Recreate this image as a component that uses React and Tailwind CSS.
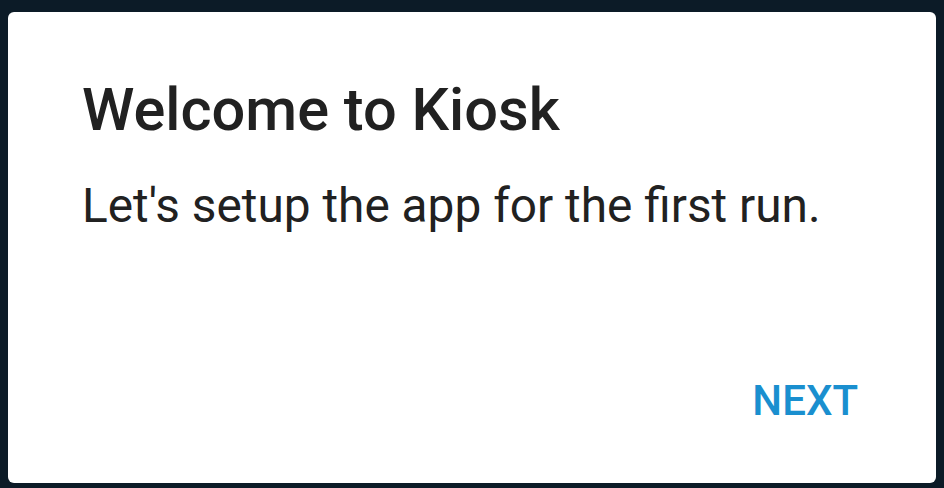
export default function App() {
  return (
    <div className="h-[488px] w-[944px] bg-[#0c1b27] pl-[8px] pr-[8px] pt-[12px] pb-[5px] font-['Roboto',sans-serif]">
      <div className="flex h-full flex-col rounded-[6px] bg-white pl-[74px] pr-[78px]">
        <h1 className="mt-[69px] text-[59.5px] font-medium leading-none text-[#212121]">Welcome to Kiosk</h1>
        <p className="mt-[42px] text-[47.8px] leading-none text-[#212121]">Let's setup the app for the first run.</p>
        <div className="mt-auto mb-[61px] flex justify-end">
          <button className="text-[42px] font-medium leading-none text-[#1a8fcf]">NEXT</button>
        </div>
      </div>
    </div>
  );
}
